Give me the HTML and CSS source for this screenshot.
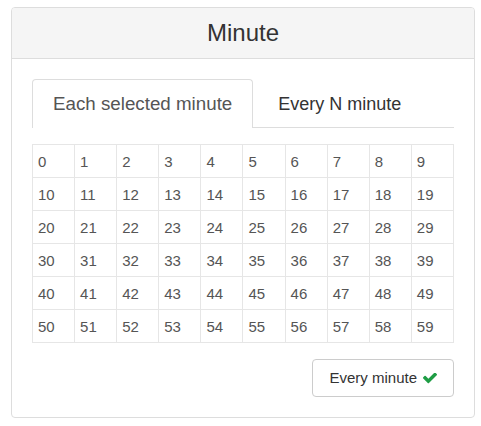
FILE: index.html
```html
<!DOCTYPE html>
<html>
<head>
<meta charset="utf-8">
<link rel="stylesheet" href="styles.css">
</head>
<body>
<div class="wrap">
  <div class="panel">
    <div class="panel-heading">Minute</div>
    <div class="panel-body">
      <ul class="tabs">
        <li class="tab active">Each selected minute</li>
        <li class="tab">Every N minute</li>
      </ul>
      <table class="grid">
        <tr><td>0</td><td>1</td><td>2</td><td>3</td><td>4</td><td>5</td><td>6</td><td>7</td><td>8</td><td>9</td></tr>
        <tr><td>10</td><td>11</td><td>12</td><td>13</td><td>14</td><td>15</td><td>16</td><td>17</td><td>18</td><td>19</td></tr>
        <tr><td>20</td><td>21</td><td>22</td><td>23</td><td>24</td><td>25</td><td>26</td><td>27</td><td>28</td><td>29</td></tr>
        <tr><td>30</td><td>31</td><td>32</td><td>33</td><td>34</td><td>35</td><td>36</td><td>37</td><td>38</td><td>39</td></tr>
        <tr><td>40</td><td>41</td><td>42</td><td>43</td><td>44</td><td>45</td><td>46</td><td>47</td><td>48</td><td>49</td></tr>
        <tr><td>50</td><td>51</td><td>52</td><td>53</td><td>54</td><td>55</td><td>56</td><td>57</td><td>58</td><td>59</td></tr>
      </table>
      <div class="actions">
        <button class="btn">Every minute
          <svg class="check" viewBox="121 430 1550 1130" width="14" height="11"><path d="M1671 566q0 40-28 68l-724 724-136 136q-28 28-68 28t-68-28l-136-136-362-362q-28-28-28-68t28-68l136-136q28-28 68-28t68 28l294 295 656-657q28-28 68-28t68 28l136 136q28 28 28 68z" fill="#1f9d45"/></svg>
        </button>
      </div>
    </div>
  </div>
</div>
</body>
</html>
```

FILE: styles.css
```css
html, body {
  margin: 0;
  padding: 0;
  background: #fff;
}
body {
  font-family: "Liberation Sans", Arial, sans-serif;
  color: #333;
}
.wrap {
  padding: 7px 6px 0 11px;
}
.panel {
  border: 1px solid #ddd;
  border-radius: 4px;
  background: #fff;
}
.panel-heading {
  height: 50px;
  background: #f5f5f5;
  border-bottom: 1px solid #ddd;
  border-radius: 3px 3px 0 0;
  display: flex;
  align-items: center;
  justify-content: center;
  font-size: 24px;
  color: #333;
}
.panel-body {
  padding: 20px;
}
.tabs {
  list-style: none;
  margin: 0;
  padding: 0;
  display: flex;
  border-bottom: 1px solid #ddd;
}
.tab {
  padding: 11px 20px 10px;
  line-height: 26px;
  font-size: 18px;
  color: #333;
  border: 1px solid transparent;
  border-bottom: none;
  margin-bottom: -1px;
  margin-right: 4px;
  border-radius: 4px 4px 0 0;
}
.tab.active {
  font-size: 18.75px;
  color: #555;
  border-color: #ddd;
  background: #fff;
  padding-bottom: 11px;
}
.grid {
  width: 100%;
  margin-top: 16px;
  border-collapse: collapse;
  table-layout: fixed;
}
.grid td {
  border: 1px solid #e6e6e6;
  padding: 7px 5px 5px;
  line-height: 20px;
  font-size: 15px;
  color: #555;
}
.actions {
  display: flex;
  justify-content: flex-end;
  margin-top: 16px;
}
.btn {
  font-family: "Liberation Sans", Arial, sans-serif;
  font-size: 15px;
  color: #333;
  background: #fff;
  border: 1px solid #ccc;
  border-radius: 4px;
  padding: 8px 16px;
  line-height: 20px;
  display: flex;
  align-items: center;
  gap: 6px;
}
.check {
  display: block;
}
```
